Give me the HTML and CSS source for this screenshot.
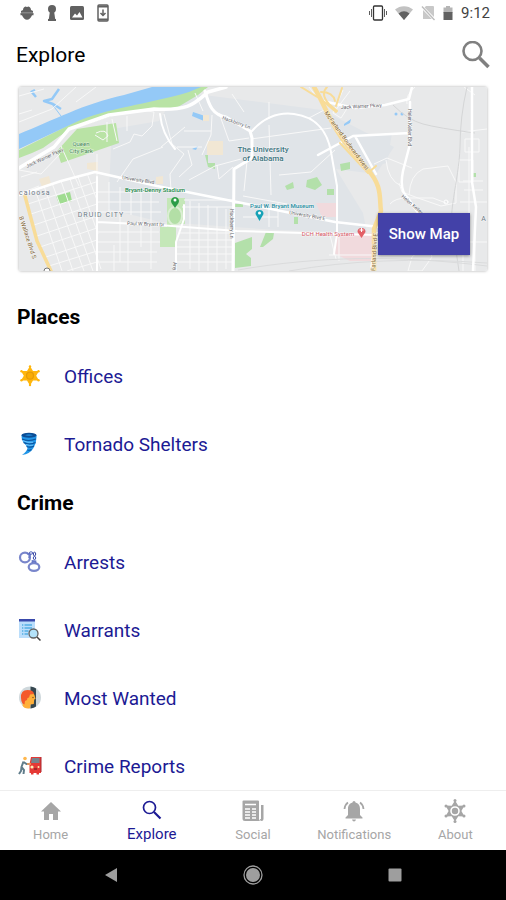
FILE: index.html
```html
<!DOCTYPE html>
<html lang="en">
<head>
    <meta charset="UTF-8">
    <meta name="viewport" content="width=device-width, initial-scale=1.0">
    <title>Explore</title>
    <link rel="stylesheet" href="styles.css">
</head>
<body>
<div class="status-bar">
    <div class="status-left">
        <svg width="14" height="16" viewBox="0 0 14 16" fill="#616161"><path d="M3 5C3 3 4 2 5.500 1.500L7 2 8.500 1.500C10 2 11 3 11 5l2 1v1.500H1V6z"/><path d="M.5 8h13v2.300H12C11 13 9 14.800 7 14.800S3 13 2 10.300H.5z"/><path d="M1 7h12v1.500H1z" fill="#858585"/></svg>
        <svg width="10" height="18" viewBox="0 0 10 18" fill="#616161"><circle cx="5" cy="5" r="4"/><path d="M3 7h4l1.500 10h-7z"/><path d="M1 15h8v2H1z"/></svg>
        <svg width="14" height="14" viewBox="0 0 14 14"><rect width="14" height="14" rx="1.500" fill="#616161"/><path d="M2 11.500l3-4 2 2 2.500-3.500 3 5.500z" fill="#fff"/></svg>
        <svg width="12" height="18" viewBox="0 0 12 18"><rect x="1" y="1" width="10" height="16" rx="1" fill="#fff" stroke="#616161" stroke-width="1.500"/><path d="M1 2.500h10M1 15.500h10" stroke="#616161" stroke-width="2"/><path d="M6 5.500v6M3.500 9L6 11.500 8.500 9" fill="none" stroke="#616161" stroke-width="1.500"/></svg>
    </div>
    <div class="status-right">
        <svg width="18" height="16" viewBox="0 0 18 16" fill="none" stroke="#333"><rect x="4.500" y="1" width="9" height="14" rx="1" stroke-width="1.300"/><path d="M2.500 4v8M15.500 4v8M.5 6v4M17.500 6v4" stroke-width=".8"/></svg>
        <svg width="18" height="14" viewBox="0 0 18 14"><path d="M0 3.500C5-1 13-1 18 3.500L9 14z" fill="#c2c2c2"/><path d="M3.500 7.500Q9 3 14.500 7.500L9 14z" fill="#616161"/></svg>
        <svg width="14" height="16" viewBox="0 0 14 16"><path d="M5 1h7q1 0 1 1v12H2V4z" fill="#c8c8c8"/><path d="M0 1l14 14" stroke="#fff" stroke-width="3"/><path d="M1 1.500L13.500 15" stroke="#bbb" stroke-width="1.300"/></svg>
        <svg width="10" height="16" viewBox="0 0 10 16"><path d="M3 1h4v1.500h2.500V8h-9V2.500H3z" fill="#b5b5b5"/><path d="M.5 7h9v8h-9z" fill="#616161"/></svg>
        <span class="clock">9:12</span>
    </div>
</div>

<header class="header">
    <h1>Explore</h1>
    <button class="search-btn" type="button" aria-label="Search">
        <svg width="28" height="28" viewBox="0 0 28 28" fill="none" stroke="#808080"><circle cx="10.500" cy="10" r="9" stroke-width="2.600"/><path d="M17.500 17l9 9" stroke-width="3.600"/></svg>
    </button>
</header>

<main class="content">
    <section class="map-card">
        <svg class="map" viewBox="0 0 468 184" preserveAspectRatio="xMidYMid slice" role="img" aria-label="Map of The University of Alabama">
            <rect width="468" height="184" fill="#e8e9ea"/>
            <!-- campus -->
            <path d="M140 34L158 5l35 4 110 14 72 37-18 27-40-5 27 44 4 20-90-3-116-8-53-13 4-80z" fill="#e0e4e8"/>
            <path d="M299 75l19-26 55-3-5 30-35 8z" fill="#e0e4e8"/>
            <!-- parks -->
            <path d="M0 63L40 43 69 28l45-13 28-9 25-6h22l-10 8-20 12-33 4-31 4-47 16-24 17-11 5-13 5z" fill="#b9e3a5"/>
            <path d="M38 64l20-22 39-6 3 20-58 20z" fill="#b9e3a5"/>
            <path d="M37 109l14-4 2 9-13 3z" fill="#a0dc91"/>
            <path d="M148 111h18v26h-9v23h-16v-20h7z" fill="#c4e7b8"/>
            <path d="M186 68h3v8h7v6l-7-2zM216 117h8v3h-8zM216 156l17-6v12l-6 5 5 4v8l-16 2zM241 160l6-15 8 1-1 6-10 8zM266 99l8-4 1 6-7 2zM288 93l10-3 5 8-7 5-9-3zM308 102h7v6h-7zM321 77l10-2v7l-9 2zM275 130h4v7h-4zM453 86h4v4h-4z" fill="#b3e0aa"/>
            <ellipse cx="156" cy="129" rx="7" ry="9" fill="#b3dfa6" stroke="#dbeed4" stroke-width="2"/>
            <!-- river -->
            <path d="M0 47C35 33 64 17 105 8L133 0h49l-12 5C130 17 87 21 55 36L0 62z" fill="#94c9f7"/>
            <path d="M12 4l5 6m-1-7l-4 2M40 2l-7 10-8 2 9 3 8 5" fill="none" stroke="#94c9f7" stroke-width="2.500" stroke-linejoin="round"/>
            <path d="M33 17l9 12" stroke="#94c9f7"/>
            <path d="M174 25l12 4-1 5-12-5zM173 62l6-3-2 4zM325 37l7-5-1 4-6 3z" fill="#94c9f7"/>
            <circle cx="377" cy="27" r="1.500" fill="#94c9f7"/><circle cx="383" cy="27" r="1.500" fill="#94c9f7"/>
            <!-- buildings -->
            <path d="M188 54h16v14h-16zM184 28h6v6h-6zM68 76l11-1v9l-11-2zM20 92l10-3 2 8-9 3zM137 90l7-1v8h-7z" fill="#f1e7d4"/>
            <path d="M297 116h20v14h-14zM316 146h42l-4 28h-23l-15-7z" fill="#f1dadd"/>
            <!-- side streets -->
            <g fill="none" stroke="#f8f8f8" stroke-width="1">
                <path d="M16 102l27 82M25 99l29 85M33 96l32 88M42 94l32 90M51 92l31 90M59 90l20 57M68 86l11 30"/>
                <path d="M9 117l68-22M12 127l66-22M15 138l63-21M18 149l60-20M21 160l57-19M24 171l54-18M30 179l48-15M48 184l30-9"/>
                <path d="M78 105h64M78 115h62M78 125h64M78 145h62M78 155h63M78 165h60M78 175h60M90 95v32M101 100v75M112 102v26M122 103v57M132 104v78M95 158v26M109 138v46"/>
                <path d="M165 113h50M163 120h52M160 146h56M160 153h56M158 160h58M156 167h60M155 175h60M171 114v68M180 116v68M189 118v66M198 120v64M207 122v60M250 120v20M259 116v24M224 130h35M224 109l44 8"/>
                <path d="M42 59l18 40M78 67v24M88 35v20M93 32l5 22M108 29v15M121 23l14 2-2 14-10 10-8-2-4 8-17 7M77 46q10-5 12 3l-5 4-8-5"/>
                <path d="M145 27l8 30 12 10-14 20 1 17M98 95l16-23 30-12M158 60h25M165 44h27M170 93l26-14 26-7M160 90l13-12-4-15M198 78l2 14 14-12M142 60l24-20M176 6l8 18M193 28l-1 20-9 20M200 26l10 28 20-3M225 25l-12-18M250 15v17M250 38l2 70M232 52l80-11M260 88l32-3 24-22M290 0l17 22-17 9M225 104l3-30"/>
                <path d="M0 9l25-7M0 35l33-13 24-22M57 15L77 0M0 27l13-4M0 83l22 4 19-20M0 107l20-8M2 90l16-5"/>
                <path d="M329 20l-7 11-8-5 10-23M331 4l-15 20M355 77l13-6 25 10M367 73q2 20 15 26M390 108q1-20 14-26l25-3 8 16v21l-15 3-23-8-16-6-3-9M371 117q5-6 17-6h26l13 5M396 0q-10 9-8 17M443 45l25-3M446 52h14v13h-14zM440 73h14v22h-14zM445 0l11 8M444 94h20M445 103h19M450 73v56M441 115h27M450 60v14M310 168h43M320 150v24M317 172l-6-24M393 170q16-15 20 0l-10 14h-14zM430 160l14-5v29M438 155h30M456 140v44"/>
            </g>
            <path d="M374 18q15 15 30 19t52 9M448 0q-7 30-7 60c-1 34-14 71-6 90l5 34" fill="none" stroke="#d4d5d6"/>
            <path d="M219 183c80-14 160-15 249-4M270 184q90-16 198-8" fill="none" stroke="#dadbdc"/>
            <!-- main roads -->
            <g fill="none" stroke="#fff" stroke-linecap="round" stroke-linejoin="round">
                <path d="M0 81l35-21 15-18 40-14L135 22c35 2 40-5 54-17L207 0" stroke-width="3.500"/>
                <path d="M0 108l42-14 34-9 62 14 90 18 88 18 45 5" stroke-width="2.500"/>
                <path d="M78 135l62 3 78 6 100 3 42 1M78 90v94" stroke-width="2"/>
                <path d="M186 4c4 15 8 24 21 26l24 14 2 7v20l-18 11-1 102" stroke-width="3"/>
                <path d="M233 44q18-20 42-17c24 3 34 20 37 38l6 34v48l-3 20M165 118v14l-8 23v28M141 27q2 20 15 35" stroke-width="2"/>
                <path d="M303 14l33 7 30-3 24-6 3-12M391 15v42l-7 27q-4 20 5 27l10 15 12 10M299 68l35-19 57-3M336 49l21 38M453 0v95l4 25-3 64" stroke-width="2.500"/>
                <path d="M358 147l-5 35" stroke-width="4"/>
                <circle cx="427" cy="115" r="2" stroke-width="1"/>
            </g>
            <!-- highways -->
            <g fill="none" stroke="#f8dc98" stroke-linecap="round" stroke-linejoin="round">
                <path d="M6 109l12 45 14 30" stroke-width="3.500"/>
                <path d="M295 0c12 20 17 39 33 58l20 24c16 17 12 29 14 42l-7 18v42" stroke-width="4.500"/>
                <path d="M282 0l21 13 14 12M308 0q-7 7 2 17l8 7M323 1l-6 18M302 5q12 0 14 9M321 56l28 30 8-7" stroke-width="2"/>
            </g>
            <circle cx="28" cy="184" r="3" fill="#fff" stroke="#777"/>
            <!-- pins -->
            <path d="M156 121l-3.500-5a4 4 0 1 1 7 0z" fill="#2c9d47"/><circle cx="156" cy="113" r="1.500" fill="#fff"/>
            <path d="M240.500 134l-4-7a4 4 0 1 1 8 0z" fill="#16a2b7"/><circle cx="240.500" cy="126" r="1.500" fill="#fff"/>
            <path d="M342.500 151l-4-6a4 4 0 1 1 8 0z" fill="#e35f66"/><path d="M342.500 141v4M340.500 143h4" stroke="#fff"/>
            <g class="map-text">
                <text x="62" y="59" class="park">Queen</text>
                <text x="62" y="66" class="park">City Park</text>
                <text x="0" y="108" class="area start">caloosa</text>
                <text x="82" y="130" class="area">DRUID CITY</text>
                <text x="244" y="65" class="campus">The University</text>
                <text x="244" y="74" class="campus">of Alabama</text>
                <text x="136" y="105" class="stadium">Bryant-Denny Stadium</text>
                <text x="263" y="121" class="museum">Paul W. Bryant Museum</text>
                <text x="309" y="149" class="hospital">DCH Health System</text>
                <text x="465" y="134" class="area">A</text>
                <text transform="translate(8 81) rotate(-25)">Jack Warner Pkwy</text>
                <text transform="translate(103 92) rotate(9)">University Blvd</text>
                <text transform="translate(108 138) rotate(2)">Paul W Bryant Dr</text>
                <text transform="translate(203 32) rotate(20)">Hackberry Ln</text>
                <text transform="translate(211 122) rotate(90)">Hackberry Ln</text>
                <text transform="translate(270 127) rotate(10)">University Blvd E</text>
                <text transform="translate(322 22) rotate(-3)">Jack Warner Pkwy</text>
                <text transform="translate(389 22) rotate(90)">Helen Keller Blvd</text>
                <text transform="translate(382 110) rotate(41)">Helen Keller</text>
                <text transform="translate(154 175) rotate(90)">Any</text>
                <text transform="translate(305 26) rotate(54)" class="highway">McFarland Boulevard West</text>
                <text transform="translate(356 184) rotate(-86)" class="highway">Farland Blvd E</text>
                <text transform="translate(0 130) rotate(72)" class="highway">B Wallace Blvd S</text>
            </g>
        </svg>
        <button class="map-btn" type="button">Show Map</button>
    </section>

    <h2>Places</h2>
    <ul class="list">
        <li><a href="#offices">
            <svg width="24" height="24" viewBox="0 0 24 24"><path d="M12 2l3 5h6l-2.800 4.700L21 16.500h-6l-3 5-3-5H3l2.800-4.800L3 7h6z" fill="#ffb60d"/><g fill="#ffb60d"><circle cx="12" cy="2.500" r="1.200"/><circle cx="20.500" cy="7.300" r="1.200"/><circle cx="20.500" cy="16.300" r="1.200"/><circle cx="12" cy="21" r="1.200"/><circle cx="3.500" cy="16.300" r="1.200"/><circle cx="3.500" cy="7.300" r="1.200"/></g><circle cx="12" cy="11.700" r="3.500" fill="#f9ac05" stroke="#e59c08" stroke-width="1.200"/></svg>
            Offices</a></li>
        <li><a href="#shelters">
            <svg width="24" height="24" viewBox="0 0 24 24"><path d="M3.500 3Q11-1 18.500 3q.5 7-3 13T4 23q5-3.500 5.500-7-1-2.500-3.500-5T3.500 3z" fill="#2196e8"/><ellipse cx="11" cy="3.200" rx="7.500" ry="2.500" fill="#0c4d95"/><path d="M7 3.200q4-2 8 0-4 1.500-8 0" fill="#1d83d2"/><path d="M4 7q6 3 14 0M5.500 10.500q6 3 12 0M8.500 14.500q4 1.500 7.500-.5M9.500 18q2 .7 4-.5" fill="none" stroke="#0c559f" stroke-width="1.200"/><path d="M5 8.700q5 2.500 10 1.500M8 12.500q4 1.500 7 .7" fill="none" stroke="#70c4fa"/></svg>
            Tornado Shelters</a></li>
    </ul>

    <h2>Crime</h2>
    <ul class="list">
        <li><a href="#arrests">
            <svg width="24" height="24" viewBox="0 0 24 24" fill="none"><ellipse cx="7" cy="7.500" rx="5" ry="4.800" stroke="#7986cb" stroke-width="2.200"/><ellipse cx="16" cy="17" rx="5.300" ry="3.900" stroke="#7986cb" stroke-width="2.200"/><path d="M9 3.500l3 1-1 3.500M14.500 13v-2l3 .3v2" stroke="#6878c8" stroke-width="1.700"/><ellipse cx="13" cy="3" rx="1.700" ry="1.200" stroke="#5263bb"/><ellipse cx="16.500" cy="4" rx="1.200" ry="1.800" stroke="#303f9f"/><ellipse cx="16.500" cy="8" rx="1.200" ry="1.600" stroke="#3949ab"/></svg>
            Arrests</a></li>
        <li><a href="#warrants">
            <svg width="24" height="24" viewBox="0 0 24 24"><path d="M1 2h16v18H1z" fill="#bbdefb"/><path d="M1 1h16v2.500H1z" fill="#3949ab"/><path d="M4 7h1.300M4 10h1.300M4 13h1.300M4 16h1.300M6.500 7H14M6.500 10H14M6.500 13h4M6.500 16H10" stroke="#2196d8" stroke-width="1.200"/><circle cx="15.500" cy="15.500" r="4.500" fill="#b4e3fa" stroke="#626262" stroke-width="1.300"/><path d="M19 19l3.500 3.500" stroke="#424242" stroke-width="1.500"/></svg>
            Warrants</a></li>
        <li><a href="#wanted">
            <svg width="24" height="24" viewBox="0 0 24 24"><circle cx="12" cy="11.500" r="11" fill="#cfd8dc"/><path d="M12.500 .6Q16 1 18 2.500v18q-2 1.400-5.500 2z" fill="#37474f"/><path d="M6 8l9-1 1.500 2 1 4-1.300.5-.4 4.500-3.300.5-.5 3.800Q6 23 4.500 19.500z" fill="#ffb03a"/><path d="M3 12Q2.500 4 9.500 4q6 0 6.500 4l-4 .5-1 3-1.500.5-.5 2-2 1-.5 3.500-2-1Q3 15 3 12z" fill="#f4592a"/><circle cx="15" cy="11.500" r=".7" fill="#784719"/></svg>
            Most Wanted</a></li>
        <li><a href="#reports">
            <svg width="24" height="24" viewBox="0 0 24 24"><path d="M13 3h10v16h-2v1.500h-2.500V19h-3v1.500H13V19h-1.500v-9z" fill="#e53935"/><path d="M14 4h7.500v5H13z" fill="#78838c"/><path d="M23 3v15" stroke="#a82930"/><circle cx="14" cy="13" r="1.600" fill="#ffecb3"/><circle cx="20.500" cy="13" r="1" fill="#ffecb3"/><path d="M16 15h3" stroke="#841f24" stroke-width="1.300"/><circle cx="7" cy="4.500" r="1.800" fill="#ffb74d"/><path d="M5.500 7.500L3.500 13 6 16l-.5 4M3.500 13L3 17l-2 3M5.500 8l3 2h3" fill="none" stroke="#607d8b" stroke-width="2"/><path d="M9 10h4" stroke="#ff9f55" stroke-width="1.500"/></svg>
            Crime Reports</a></li>
    </ul>
</main>

<nav class="tabs">
    <a href="#home">
        <svg width="24" height="24" viewBox="0 0 24 24" fill="currentColor"><path d="M12 3L2 12.500h3V21h5v-6h4v6h5v-8.500h3z"/></svg>
        <span>Home</span>
    </a>
    <a href="#explore" class="active">
        <svg width="24" height="24" viewBox="0 0 24 24" fill="none" stroke="currentColor"><circle cx="9.500" cy="9.500" r="6" stroke-width="1.700"/><path d="M14 14l6.500 6.500" stroke-width="2.200"/></svg>
        <span>Explore</span>
    </a>
    <a href="#social">
        <svg width="24" height="24" viewBox="0 0 24 24"><path d="M1.500 2.500q0-1 1-1H17q1 0 1 1V20q0 2 2 2H4q-2.500 0-2.500-2.500z" fill="currentColor"/><path d="M20 6h2.500v14q0 2-2 2-1.500 0-1.500-2h1z" fill="currentColor"/><path d="M4 5.500h11M4 10h5M11 10h4M4 13h5M11 13h4M4 16h5M11 16h4M4 19h5M11 19h4" stroke="#fff" stroke-width="1.400"/></svg>
        <span>Social</span>
    </a>
    <a href="#notifications">
        <svg width="24" height="24" viewBox="0 0 24 24"><path d="M12 2q1.500 0 1.500 1.500C17 4.500 18 7 18 10v6l2.500 2.500v1h-17v-1L6 16v-6c0-3 1-5.500 4.500-6.500Q10.500 2 12 2zM10 20.500h4q-.5 2-2 2t-2-2z" fill="currentColor"/><path d="M6 3.500Q3 5.500 2.500 10M18 3.500q3 2 3.500 6.500" fill="none" stroke="currentColor" stroke-width="1.800"/></svg>
        <span>Notifications</span>
    </a>
    <a href="#about">
        <svg width="24" height="24" viewBox="0 0 24 24"><path d="M12 1.500l3.300 5.300 6.200-.2L18.400 12l3.100 5.400-6.200-.2L12 22.500l-3.300-5.300-6.200.2L5.600 12 2.500 6.600l6.200.2z" fill="currentColor"/><g fill="currentColor"><circle cx="12" cy="1.500" r="1.500"/><circle cx="21" cy="7" r="1.500"/><circle cx="21" cy="17" r="1.500"/><circle cx="12" cy="22.500" r="1.500"/><circle cx="3" cy="17" r="1.500"/><circle cx="3" cy="7" r="1.500"/></g><circle cx="12" cy="12" r="4" fill="currentColor" stroke="#fff" stroke-width="1.600"/></svg>
        <span>About</span>
    </a>
</nav>

<div class="system-nav">
    <button type="button" aria-label="Back"><svg width="14" height="16" viewBox="0 0 14 16"><path d="M1 8l12-7v14z" fill="#9e9e9e"/></svg></button>
    <button type="button" aria-label="Home"><svg width="20" height="20" viewBox="0 0 20 20"><circle cx="10" cy="10" r="9" fill="none" stroke="#9e9e9e" stroke-width="1.300"/><circle cx="10" cy="10" r="7" fill="#9e9e9e"/></svg></button>
    <button type="button" aria-label="Recent apps"><svg width="14" height="14" viewBox="0 0 14 14"><rect x=".5" y=".5" width="13" height="13" rx="1" fill="#9e9e9e"/></svg></button>
</div>
</body>
</html>
```
FILE: styles.css
```css
* {
    box-sizing: border-box;
}

body {
    margin: 0;
    height: 100vh;
    display: flex;
    flex-direction: column;
    font-family: Roboto, sans-serif;
    background-color: #fff;
    color: #000;
}

svg {
    display: block;
    flex-shrink: 0;
}

button {
    padding: 0;
    border: none;
    background: none;
    font-family: inherit;
    cursor: pointer;
}

a {
    text-decoration: none;
}

.status-bar {
    flex-shrink: 0;
    height: 26px;
    padding: 0 16px 0 20px;
    display: flex;
    align-items: center;
    justify-content: space-between;
}

.status-left {
    display: flex;
    align-items: center;
    gap: 13px;
}

.status-right {
    display: flex;
    align-items: center;
    gap: 8px;
}

.clock {
    font-size: 15px;
    color: #424242;
}

.header {
    flex-shrink: 0;
    height: 58px;
    padding: 0 16px;
    display: flex;
    align-items: center;
    justify-content: space-between;
}

.header h1 {
    margin: 0;
    font-size: 21px;
    font-weight: 400;
}

.content {
    flex: 1;
    min-height: 0;
    padding-top: 3px;
    overflow-y: auto;
    scrollbar-width: none;
}

.map-card {
    position: relative;
    height: 184px;
    margin: 0 19px 21px;
    border-radius: 2px;
    box-shadow: 0 0 3px rgba(0, 0, 0, 0.35);
}

.map {
    width: 100%;
    height: 100%;
    border-radius: 2px;
}

.map-text {
    font-size: 5px;
    fill: #5f6368;
    stroke: #fff;
    stroke-width: 1px;
    stroke-opacity: 0.6;
    paint-order: stroke;
}

.map-text .park,
.map-text .area,
.map-text .campus,
.map-text .stadium,
.map-text .museum,
.map-text .hospital {
    text-anchor: middle;
}

.map-text .park {
    font-size: 6px;
    fill: #3f8557;
}

.map-text .area {
    font-size: 7px;
    letter-spacing: 1px;
    fill: #6b7885;
}

.map-text .start {
    text-anchor: start;
}

.map-text .campus {
    font-size: 8px;
    font-weight: 500;
    fill: #3d7480;
}

.map-text .stadium {
    font-size: 6px;
    font-weight: 500;
    fill: #21874a;
}

.map-text .museum {
    font-size: 6px;
    font-weight: 500;
    fill: #228ca0;
}

.map-text .hospital {
    font-size: 6px;
    fill: #d45664;
}

.map-text .highway {
    font-size: 6px;
    fill: #7d6130;
}

.map-btn {
    position: absolute;
    right: 17px;
    bottom: 16px;
    width: 92px;
    height: 42px;
    background-color: #4341a8;
    color: #fff;
    font-size: 15px;
    font-weight: 500;
    box-shadow: 0 1px 3px rgba(0, 0, 0, 0.4);
}

h2 {
    margin: 0;
    padding: 0 17px;
    font-size: 21px;
    font-weight: 700;
    line-height: 50px;
}

.list {
    margin: 0;
    padding: 0;
    list-style: none;
}

.list a {
    height: 68px;
    padding: 0 18px;
    display: flex;
    align-items: center;
    gap: 22px;
    font-size: 19px;
    color: #1c1a94;
}

.tabs {
    flex-shrink: 0;
    height: 60px;
    display: flex;
    border-top: 1px solid #eee;
    background-color: #fff;
}

.tabs a {
    flex: 1;
    display: flex;
    flex-direction: column;
    align-items: center;
    justify-content: center;
    gap: 4px;
    font-size: 13px;
    line-height: 16px;
    color: #a6a6a6;
}

.tabs .active {
    padding-bottom: 2px;
    font-size: 15px;
    color: #1c1a94;
}

.system-nav {
    flex-shrink: 0;
    height: 50px;
    padding: 0 40px;
    display: flex;
    background-color: #000;
}

.system-nav button {
    flex: 1;
    display: flex;
    align-items: center;
    justify-content: center;
}
```
